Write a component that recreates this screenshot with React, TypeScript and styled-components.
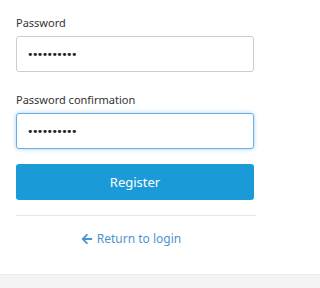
import styled, { createGlobalStyle } from "styled-components";
import { FaArrowLeft } from "react-icons/fa";

const GlobalStyle = createGlobalStyle`
  html, body {
    margin: 0;
    padding: 0;
    background: #fff;
    font-family: "Noto Sans", "Open Sans", sans-serif;
  }
`;

export default function App() {
  return (
    <>
      <GlobalStyle />
      <Page>
        <Form onSubmit={(e) => e.preventDefault()}>
          <Field>
            <Label htmlFor="password">Password</Label>
            <Input id="password" type="password" defaultValue="1234567890" />
          </Field>
          <Field>
            <Label htmlFor="password_confirmation">Password confirmation</Label>
            <Input
              id="password_confirmation"
              type="password"
              defaultValue="1234567890"
              $focused
              autoFocus
            />
          </Field>
          <Button type="submit">Register</Button>
          <Divider />
          <BackLink href="#">
            <FaArrowLeft size={12} />
            Return to login
          </BackLink>
        </Form>
      </Page>
      <Footer />
    </>
  );
}

const Page = styled.div`
  padding: 14px 0 25px 16px;
`;

const Form = styled.form`
  width: 238px;
  display: flex;
  flex-direction: column;
`;

const Field = styled.div`
  display: flex;
  flex-direction: column;
  margin-bottom: 19px;

  &:last-of-type {
    margin-bottom: 15px;
  }
`;

const Label = styled.label`
  font-size: 11px;
  line-height: 17px;
  color: #333;
  margin-bottom: 5px;
`;

const Input = styled.input<{ $focused?: boolean }>`
  box-sizing: border-box;
  width: 100%;
  height: 36px;
  padding: 0 10px;
  font-family: "DejaVu Sans", sans-serif;
  font-size: 11px;
  letter-spacing: -1.6px;
  color: #222;
  caret-color: #222;
  border: 1px solid ${(p) => (p.$focused ? "#66afe9" : "#ccc")};
  border-radius: 3px;
  box-shadow: ${(p) =>
    p.$focused ? "0 0 4px rgba(102, 175, 233, 0.6)" : "none"};
  outline: none;
  background: #fff;
`;

const Button = styled.button`
  height: 36px;
  border: none;
  border-radius: 3px;
  background: #1b9ad8;
  color: #fff;
  font-family: inherit;
  font-size: 13px;
  cursor: pointer;
`;

const Divider = styled.hr`
  width: 240px;
  margin: 15px 0 13px;
  border: none;
  border-top: 1px solid #e6e6e6;
`;

const BackLink = styled.a`
  display: flex;
  align-items: center;
  justify-content: center;
  gap: 4px;
  line-height: 20px;
  font-size: 12px;
  color: #4a95d0;
  text-decoration: none;
  margin-right: 8px;
`;

const Footer = styled.div`
  height: 14px;
  background: #f4f4f4;
  border-top: 1px solid #ececec;
`;
